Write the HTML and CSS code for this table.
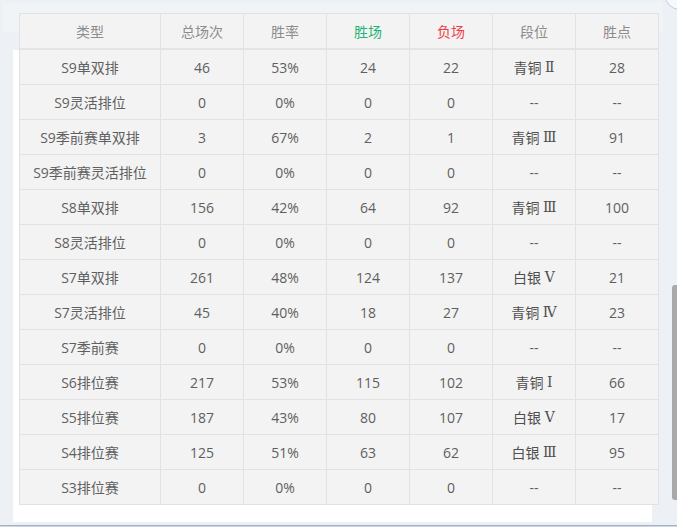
FILE: index.html
```html
<!DOCTYPE html>
<html lang="zh">
<head>
<meta charset="utf-8">
<link rel="stylesheet" href="styles.css">
</head>
<body>
<div class="view">
  <div class="top-strip"></div>
  <div class="thead row">
    <div class="cell">类型</div>
    <div class="cell">总场次</div>
    <div class="cell">胜率</div>
    <div class="cell win">胜场</div>
    <div class="cell lose">负场</div>
    <div class="cell">段位</div>
    <div class="cell">胜点</div>
  </div>
  <div class="panel">
    <div class="tbody">
      <div class="row"><div class="cell">S9单双排</div><div class="cell">46</div><div class="cell">53%</div><div class="cell">24</div><div class="cell">22</div><div class="cell rank">青铜 <span class="num">Ⅱ</span></div><div class="cell">28</div></div>
      <div class="row"><div class="cell">S9灵活排位</div><div class="cell">0</div><div class="cell">0%</div><div class="cell">0</div><div class="cell">0</div><div class="cell">--</div><div class="cell">--</div></div>
      <div class="row"><div class="cell">S9季前赛单双排</div><div class="cell">3</div><div class="cell">67%</div><div class="cell">2</div><div class="cell">1</div><div class="cell rank">青铜 <span class="num">Ⅲ</span></div><div class="cell">91</div></div>
      <div class="row"><div class="cell">S9季前赛灵活排位</div><div class="cell">0</div><div class="cell">0%</div><div class="cell">0</div><div class="cell">0</div><div class="cell">--</div><div class="cell">--</div></div>
      <div class="row"><div class="cell">S8单双排</div><div class="cell">156</div><div class="cell">42%</div><div class="cell">64</div><div class="cell">92</div><div class="cell rank">青铜 <span class="num">Ⅲ</span></div><div class="cell">100</div></div>
      <div class="row"><div class="cell">S8灵活排位</div><div class="cell">0</div><div class="cell">0%</div><div class="cell">0</div><div class="cell">0</div><div class="cell">--</div><div class="cell">--</div></div>
      <div class="row"><div class="cell">S7单双排</div><div class="cell">261</div><div class="cell">48%</div><div class="cell">124</div><div class="cell">137</div><div class="cell rank">白银 <span class="num">Ⅴ</span></div><div class="cell">21</div></div>
      <div class="row"><div class="cell">S7灵活排位</div><div class="cell">45</div><div class="cell">40%</div><div class="cell">18</div><div class="cell">27</div><div class="cell rank">青铜 <span class="num">Ⅳ</span></div><div class="cell">23</div></div>
      <div class="row"><div class="cell">S7季前赛</div><div class="cell">0</div><div class="cell">0%</div><div class="cell">0</div><div class="cell">0</div><div class="cell">--</div><div class="cell">--</div></div>
      <div class="row"><div class="cell">S6排位赛</div><div class="cell">217</div><div class="cell">53%</div><div class="cell">115</div><div class="cell">102</div><div class="cell rank">青铜 <span class="num">Ⅰ</span></div><div class="cell">66</div></div>
      <div class="row"><div class="cell">S5排位赛</div><div class="cell">187</div><div class="cell">43%</div><div class="cell">80</div><div class="cell">107</div><div class="cell rank">白银 <span class="num">Ⅴ</span></div><div class="cell">17</div></div>
      <div class="row"><div class="cell">S4排位赛</div><div class="cell">125</div><div class="cell">51%</div><div class="cell">63</div><div class="cell">62</div><div class="cell rank">白银 <span class="num">Ⅲ</span></div><div class="cell">95</div></div>
      <div class="row"><div class="cell">S3排位赛</div><div class="cell">0</div><div class="cell">0%</div><div class="cell">0</div><div class="cell">0</div><div class="cell">--</div><div class="cell">--</div></div>
    </div>
  </div>
  <div class="bottom-line"></div>
  <div class="scroll-thumb"></div>
  <div class="corner-circle"></div>
</div>
</body>
</html>
```

FILE: styles.css
```css
* { box-sizing: border-box; }
html, body {
  margin: 0;
  padding: 0;
  width: 677px;
  height: 527px;
  overflow: hidden;
  background: #edf1f5;
  font-family: "Open Sans", "Noto Sans CJK SC", sans-serif;
  font-size: 14px;
}
.view {
  position: relative;
  width: 677px;
  height: 527px;
  padding: 13px 0 0 13px;
}
.top-strip {
  position: absolute;
  left: 3px;
  top: 3px;
  width: 660px;
  height: 29px;
  background: rgba(255,255,255,0.25);
}
.row {
  display: grid;
  grid-template-columns: 141px repeat(6, 83px);
  width: 640px;
  border-left: 1px solid #e2e2e2;
}
.cell {
  height: 35px;
  display: flex;
  align-items: center;
  justify-content: center;
  background: #f3f3f3;
  border-right: 1px solid #e2e2e2;
  border-bottom: 1px solid #e2e2e2;
  color: #5f5f5f;
  white-space: pre;
}
.thead {
  position: relative;
  margin-left: 6px;
  border-top: 1px solid #e2e2e2;
}
.thead .cell {
  height: 36px;
  border-bottom: 2px solid #e4e4e4;
  color: #8c8c8c;
}
.thead .cell.win { color: #22b27a; }
.thead .cell.lose { color: #f03d45; }
.panel {
  width: 639px;
  height: 472px;
  background: #ffffff;
}
.tbody {
  margin-left: 6px;
}
.rank { color: #4f4f4f; }
.num {
  font-family: "DejaVu Serif", "DejaVu Sans", serif;
  font-size: 14px;
}
.bottom-line {
  position: absolute;
  left: 0;
  top: 525px;
  width: 677px;
  height: 2px;
  background: #9fb1c3;
  border-bottom: 1px solid #cfd8e2;
}
.scroll-thumb {
  position: absolute;
  left: 672px;
  top: 285px;
  width: 6px;
  height: 215px;
  background: #a9a9a9;
  border-radius: 3px 0 0 3px;
}
.corner-circle {
  position: absolute;
  left: 664px;
  top: -22px;
  width: 32px;
  height: 32px;
  border-radius: 50%;
  border: 1.5px solid #b9cde0;
  background: #f6f9fc;
}
```
